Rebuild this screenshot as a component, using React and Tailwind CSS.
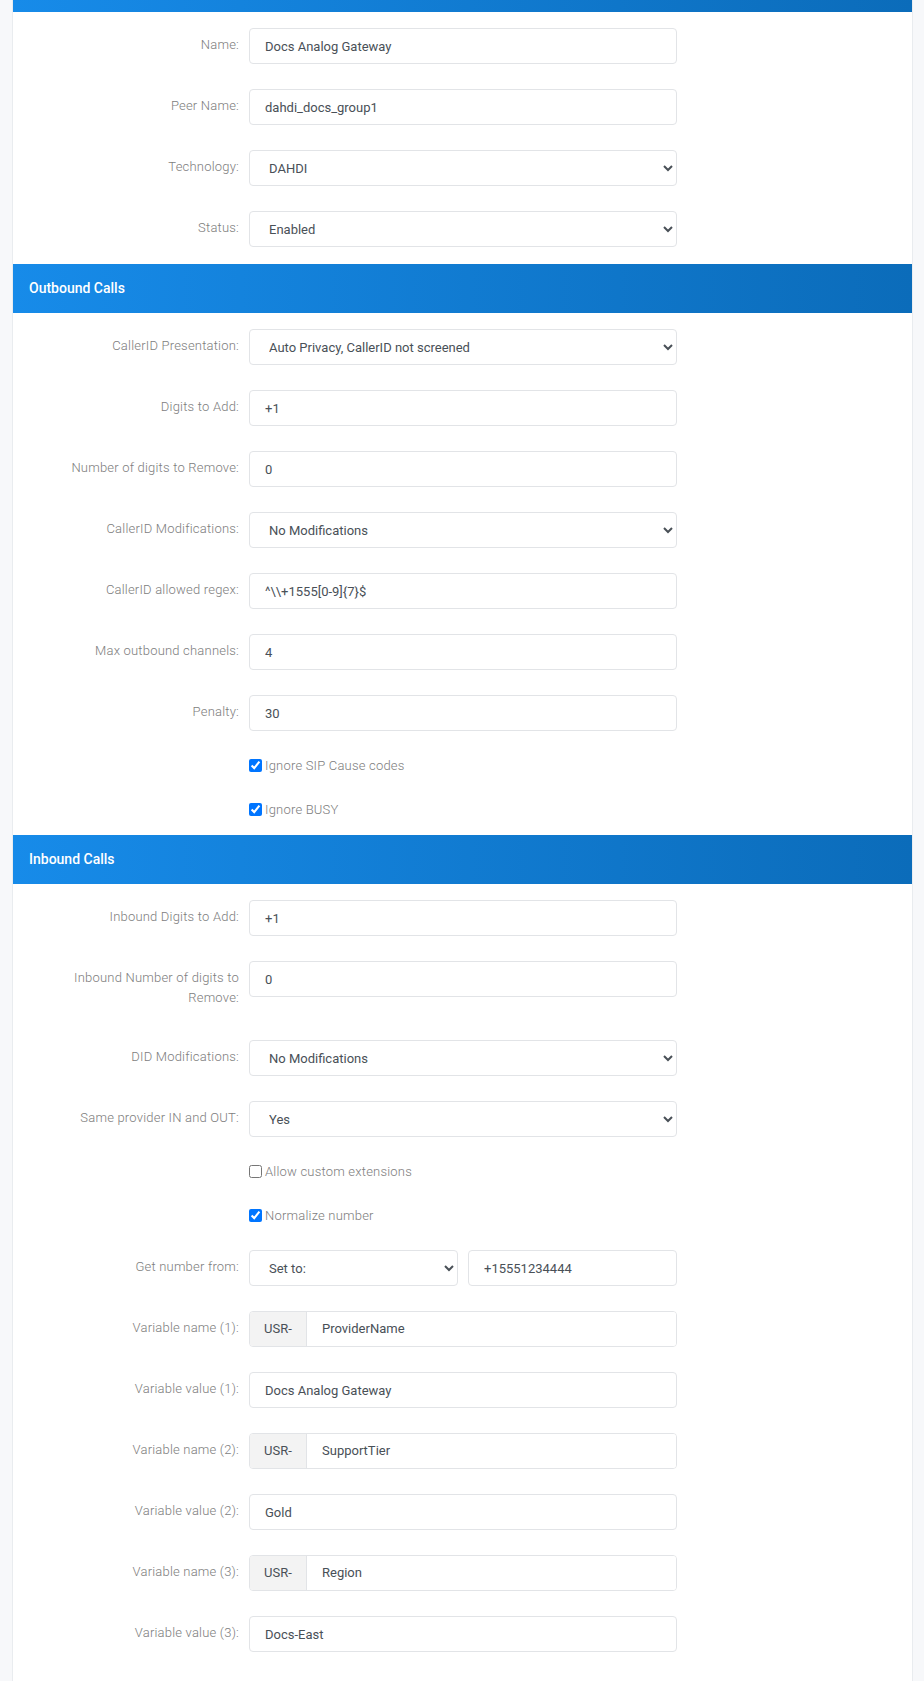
import React from "react";

const inputCls =
  "w-full h-[36px] bg-white border border-[#e2e4e7] rounded-[4px] px-[15px] text-[13px] text-[#495057] outline-none";

const Row = ({ label, children }) => (
  <div className="grid grid-cols-[236px_428px]">
    <label className="text-right pl-[26px] pr-[10px] py-[7px] leading-[20px] text-[13px] font-light tracking-[0.2px] text-[#7d7d7d]">
      {label}
    </label>
    <div>{children}</div>
  </div>
);

const TextRow = ({ label, value }) => (
  <Row label={label}>
    <input type="text" defaultValue={value} className={inputCls} />
  </Row>
);

const SelectRow = ({ label, value }) => (
  <Row label={label}>
    <select defaultValue={value} className={inputCls}>
      <option>{value}</option>
    </select>
  </Row>
);

const CheckRow = ({ label, checked }) => (
  <div className="grid grid-cols-[236px_428px]">
    <div />
    <label className="flex items-center h-[19px] text-[13px] font-light tracking-[0.2px] text-[#7d7d7d]">
      <input type="checkbox" defaultChecked={checked} className="m-0 mr-[3px] w-[13px] h-[13px]" />
      {label}
    </label>
  </div>
);

const UsrRow = ({ label, value }) => (
  <Row label={label}>
    <div className="flex h-[36px] border border-[#e2e4e7] rounded-[4px] overflow-hidden">
      <span className="w-[57px] shrink-0 flex items-center justify-center bg-[#f3f3f3] border-r border-[#e2e4e7] text-[13px] text-[#495057]">
        USR-
      </span>
      <input type="text" defaultValue={value} className="flex-1 min-w-0 px-[15px] text-[13px] text-[#495057] outline-none bg-white" />
    </div>
  </Row>
);

const SectionHeader = ({ title }) => (
  <div className="h-[49px] flex items-center pl-[16px] bg-gradient-to-r from-[#178be9] to-[#0b6cba] text-white text-[14px] font-medium">
    {title}
  </div>
);

export default function App() {
  return (
    <div className="min-h-screen bg-[#f7f8fa] px-[12px] pr-[11px] font-['Roboto',sans-serif]">
      <div className="bg-white border-x border-b border-[#e9ecef]">
        <div className="h-[12px] bg-gradient-to-r from-[#178be9] to-[#0b6cba]" />

        <div className="flex flex-col gap-[25px] pt-[16px] pb-[17px]">
          <TextRow label="Name:" value="Docs Analog Gateway" />
          <TextRow label="Peer Name:" value="dahdi_docs_group1" />
          <SelectRow label="Technology:" value="DAHDI" />
          <SelectRow label="Status:" value="Enabled" />
        </div>

        <SectionHeader title="Outbound Calls" />
        <div className="flex flex-col gap-[25px] pt-[16px] pb-[16px]">
          <SelectRow label="CallerID Presentation:" value="Auto Privacy, CallerID not screened" />
          <TextRow label="Digits to Add:" value="+1" />
          <TextRow label="Number of digits to Remove:" value="0" />
          <SelectRow label="CallerID Modifications:" value="No Modifications" />
          <TextRow label="CallerID allowed regex:" value={"^\\\\+1555[0-9]{7}$"} />
          <TextRow label="Max outbound channels:" value="4" />
          <TextRow label="Penalty:" value="30" />
          <CheckRow label="Ignore SIP Cause codes" checked />
          <CheckRow label="Ignore BUSY" checked />
        </div>

        <SectionHeader title="Inbound Calls" />
        <div className="flex flex-col gap-[25px] pt-[16px] pb-[60px]">
          <TextRow label="Inbound Digits to Add:" value="+1" />
          <TextRow label="Inbound Number of digits to Remove:" value="0" />
          <SelectRow label="DID Modifications:" value="No Modifications" />
          <SelectRow label="Same provider IN and OUT:" value="Yes" />
          <CheckRow label="Allow custom extensions" />
          <CheckRow label="Normalize number" checked />
          <Row label="Get number from:">
            <div className="grid grid-cols-2 gap-[10px]">
              <select defaultValue="Set to:" className={inputCls}>
                <option>Set to:</option>
              </select>
              <input type="text" defaultValue="+15551234444" className={inputCls} />
            </div>
          </Row>
          <UsrRow label="Variable name (1):" value="ProviderName" />
          <TextRow label="Variable value (1):" value="Docs Analog Gateway" />
          <UsrRow label="Variable name (2):" value="SupportTier" />
          <TextRow label="Variable value (2):" value="Gold" />
          <UsrRow label="Variable name (3):" value="Region" />
          <TextRow label="Variable value (3):" value="Docs-East" />
        </div>
      </div>
    </div>
  );
}
